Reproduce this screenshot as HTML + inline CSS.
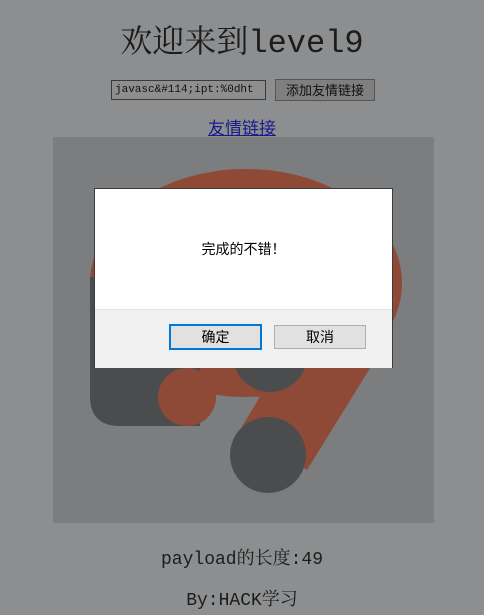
<!DOCTYPE html>
<html><head><meta charset="utf-8"><style>
body{margin:0;width:484px;height:615px;background:#8d8e8f;font-family:"Liberation Serif","Noto Serif CJK SC",serif;position:relative;overflow:hidden}
.a{position:absolute}
h1{position:absolute;top:16px;left:0;width:484px;text-align:center;margin:0;font-size:32px;font-weight:normal;color:#1c1c1c;font-family:"Liberation Mono","Noto Serif CJK SC",monospace}
.inp{left:111px;top:80px;width:150px;height:18px;border:1px solid #3a3a3a;background:#8e8e8e;font:11px "Liberation Mono",monospace;color:#111;line-height:18px;padding-left:3px;overflow:hidden;white-space:nowrap}
.btn1{left:275px;top:79px;width:98px;height:20px;border:1px solid #555;background:#7f7f7f;font:13px "Noto Sans CJK SC",sans-serif;color:#111;text-align:center;line-height:20px}
.lnk{left:0;width:484px;top:116px;text-align:center;font-size:17px;color:#1a1a8e;text-decoration:underline;font-family:"Noto Sans CJK SC",sans-serif;line-height:22px}
.t{left:0;width:484px;text-align:center;font-size:18px;color:#1c1c1c;font-family:"Liberation Mono","Noto Serif CJK SC",monospace}
.dlg{left:94px;top:188px;width:297px;height:178px;border:1px solid #3c3c3c;background:#fff}
.foot{position:absolute;left:0;top:120px;width:297px;height:58px;background:#f0f0f0;border-top:1px solid #e3e3e3}
.b{position:absolute;top:15px;height:22px;background:#e1e1e1;font:14px "Noto Sans CJK SC",sans-serif;text-align:center;line-height:22px;color:#000}
</style></head><body>
<h1>欢迎来到level9</h1>
<div class="a inp">javasc&amp;#114;ipt:%0dht</div>
<div class="a btn1">添加友情链接</div>
<div class="a lnk">友情链接</div>
<svg class="a" style="left:53px;top:137px" width="381" height="386">
<rect width="381" height="386" fill="#7c7d7e"/>
<ellipse cx="193" cy="146" rx="156" ry="114" fill="#8e4a36"/>
<polygon points="247,193 319,228 254,333 187,293" fill="#8e4a36"/>
<path d="M37 140 L147 140 L147 289 L67 289 Q37 289 37 259 Z" fill="#4b4c4e"/>
<circle cx="134" cy="260" r="29" fill="#8e4a36"/>
<circle cx="217" cy="218" r="37" fill="#4b4c4e"/>
<circle cx="215" cy="318" r="38" fill="#4b4c4e"/>
</svg>
<div class="a dlg">
<div class="a" style="left:0;top:50px;width:297px;text-align:center;font:14px 'Noto Sans CJK SC',sans-serif;color:#000">完成的不错！</div>
<div class="foot">
<div class="b" style="left:74px;width:89px;border:2px solid #0078d7;top:14px">确定</div>
<div class="b" style="left:179px;width:90px;border:1px solid #adadad">取消</div>
</div></div>
<div class="a t" style="top:544px">payload的长度:49</div>
<div class="a t" style="top:585px">By:HACK学习</div>
</body></html>
